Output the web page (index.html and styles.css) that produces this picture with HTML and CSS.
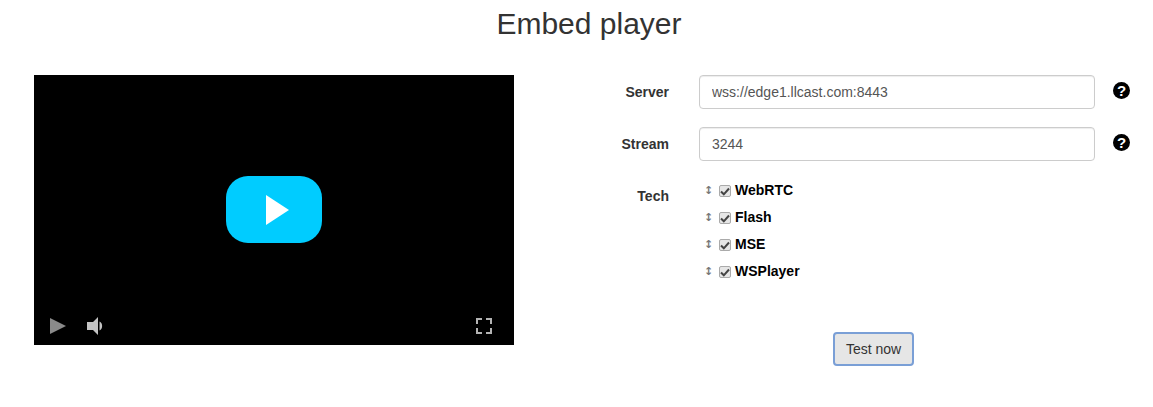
FILE: index.html
```html
<!DOCTYPE html>
<html lang="en">
<head>
  <meta charset="utf-8">
  <title>Embed player</title>
  <link rel="stylesheet" href="styles.css">
</head>
<body>
  <h1 class="title">Embed player</h1>
  <div class="content">
    <div class="player">
      <div class="big-play">
        <svg width="24" height="30" viewBox="0 0 24 30"><polygon points="0,0 23,15 0,30" fill="#fff"/></svg>
      </div>
      <div class="controls">
        <svg class="ctl-play" width="16" height="16" viewBox="0 0 16 16"><polygon points="0,0 16,8 0,16" fill="#8a8a8a"/></svg>
        <svg class="ctl-volume" width="17" height="18" viewBox="0 0 17 18"><path d="M0 5h6l5-5v18l-5-5H0z" fill="#c4c4c4"/><path d="M12.500 4.500c3.500 1.500 3.500 7.500 0 9z" fill="#c4c4c4"/></svg>
        <svg class="ctl-full" width="16" height="16" viewBox="0 0 16 16"><path d="M1 6V1h5M10 1h5v5M15 10v5h-5M6 15H1v-5" fill="none" stroke="#b4b4b4" stroke-width="2"/></svg>
      </div>
    </div>
    <form class="form">
      <div class="row">
        <label class="row-label" for="server">Server</label>
        <input class="text-input" type="text" id="server" value="wss://edge1.llcast.com:8443">
        <span class="help">?</span>
      </div>
      <div class="row">
        <label class="row-label" for="stream">Stream</label>
        <input class="text-input" type="text" id="stream" value="3244">
        <span class="help">?</span>
      </div>
      <div class="row row-tech">
        <span class="row-label">Tech</span>
        <ul class="tech-list">
          <li class="tech"><span class="sort">&#8597;</span><span class="check"><svg width="10" height="9" viewBox="0 0 10 9"><path d="M1 4.500l2.800 2.800L9 1.500" fill="none" stroke="#444" stroke-width="2"/></svg></span>WebRTC</li>
          <li class="tech"><span class="sort">&#8597;</span><span class="check"><svg width="10" height="9" viewBox="0 0 10 9"><path d="M1 4.500l2.800 2.800L9 1.500" fill="none" stroke="#444" stroke-width="2"/></svg></span>Flash</li>
          <li class="tech"><span class="sort">&#8597;</span><span class="check"><svg width="10" height="9" viewBox="0 0 10 9"><path d="M1 4.500l2.800 2.800L9 1.500" fill="none" stroke="#444" stroke-width="2"/></svg></span>MSE</li>
          <li class="tech"><span class="sort">&#8597;</span><span class="check"><svg width="10" height="9" viewBox="0 0 10 9"><path d="M1 4.500l2.800 2.800L9 1.500" fill="none" stroke="#444" stroke-width="2"/></svg></span>WSPlayer</li>
        </ul>
      </div>
      <div class="actions">
        <button class="test-btn" type="button">Test now</button>
      </div>
    </form>
  </div>
</body>
</html>
```

FILE: styles.css
```css
html,
body {
  margin: 0;
  padding: 0;
}
body {
  background: #fff;
  color: #333;
  font-family: "Liberation Sans", Arial, sans-serif;
  font-size: 14px;
}
.title {
  margin: 0;
  padding-left: 25px;
  height: 75px;
  box-sizing: border-box;
  padding-top: 7px;
  font-size: 30px;
  line-height: 33px;
  font-weight: 400;
  text-align: center;
}
.content {
  display: flex;
  padding-left: 34px;
}
.player {
  position: relative;
  width: 480px;
  height: 270px;
  background: #000;
  display: flex;
  align-items: center;
  justify-content: center;
}
.big-play {
  width: 96px;
  height: 67px;
  margin-bottom: 1px;
  border-radius: 22px;
  background: #00ccff;
  display: flex;
  align-items: center;
  justify-content: center;
  padding-left: 8px;
  box-sizing: border-box;
}
.controls {
  position: absolute;
  left: 16px;
  right: 22px;
  bottom: 10px;
  display: flex;
  align-items: center;
}
.ctl-volume {
  margin-left: 21px;
}
.ctl-full {
  margin-left: auto;
}
.form {
  width: 560px;
  margin-left: 78px;
}
.row {
  display: flex;
  align-items: flex-start;
  margin-bottom: 18px;
}
.row-label {
  width: 77px;
  padding-top: 9px;
  line-height: 16px;
  font-weight: 700;
  text-align: right;
}
.text-input {
  width: 396px;
  height: 34px;
  box-sizing: border-box;
  margin-left: 30px;
  padding: 6px 12px;
  border: 1px solid #ccc;
  border-radius: 4px;
  color: #555;
  font-family: inherit;
  font-size: 14px;
  box-shadow: inset 0 1px 1px rgba(0, 0, 0, 0.075);
}
.help {
  width: 17px;
  height: 17px;
  margin: 7px 0 0 18px;
  border-radius: 50%;
  background: #000;
  color: #fff;
  font-size: 15px;
  font-weight: 700;
  line-height: 17px;
  text-align: center;
}
.row-tech {
  margin-bottom: 0;
}
.tech-list {
  list-style: none;
  margin: -3px 0 0 35px;
  padding: 0;
}
.tech {
  display: flex;
  align-items: center;
  height: 27px;
  color: #000;
  font-weight: 700;
  line-height: 16px;
}
.sort {
  width: 15px;
  margin-top: 2px;
  color: #777;
  font-family: "DejaVu Sans", sans-serif;
  font-size: 11px;
}
.check {
  display: flex;
  align-items: center;
  justify-content: center;
  width: 12px;
  height: 12px;
  margin-top: 3px;
  margin-right: 4px;
  box-sizing: border-box;
  border: 1px solid #aaa;
  border-radius: 2px;
  background: #e6e6e6;
}
.actions {
  padding: 48px 0 0 241px;
}
.test-btn {
  width: 81px;
  height: 34px;
  border: 2px solid #7a9fd6;
  border-radius: 4px;
  background: #e6e6e6;
  color: #333;
  font-family: inherit;
  font-size: 14px;
}
```
